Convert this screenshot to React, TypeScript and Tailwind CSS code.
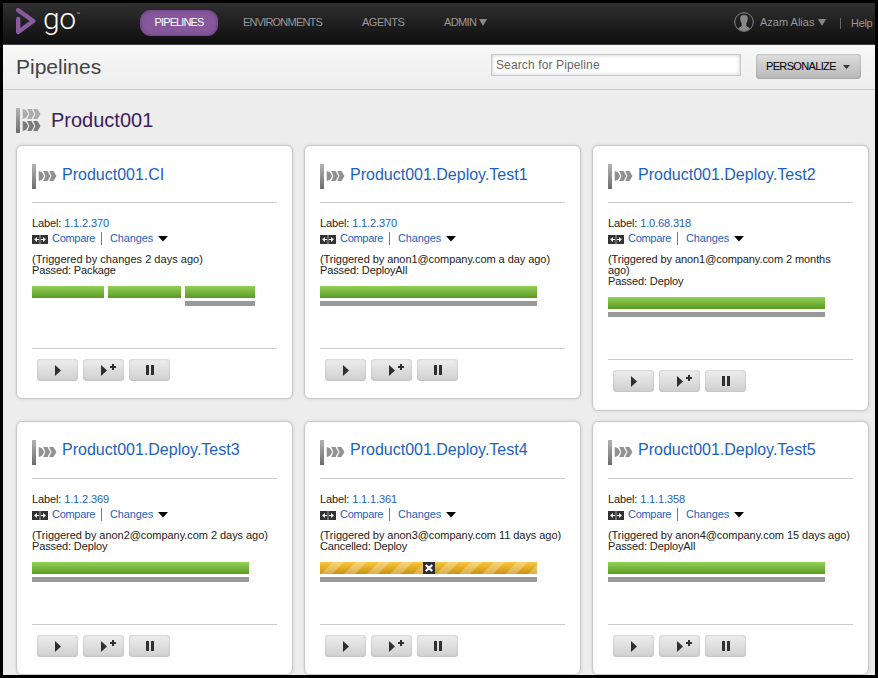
import React from "react";

type Pipeline = {
  name: string;
  label: string;
  trigger: string[];
  status: string;
  stages?: "three" | "cancelled";
  titleOffset: string;
  triggerSpacing: string;
};

const pipelines: Pipeline[] = [
  { name: "Product001.CI", label: "1.1.2.370", trigger: ["(Triggered by changes 2 days ago)"], status: "Passed: Package", stages: "three", titleOffset: "pt-px", triggerSpacing: "tracking-[0.02px]" },
  { name: "Product001.Deploy.Test1", label: "1.1.2.370", trigger: ["(Triggered by anon1@company.com a day ago)"], status: "Passed: DeployAll", titleOffset: "pt-px", triggerSpacing: "tracking-[-0.06px]" },
  { name: "Product001.Deploy.Test2", label: "1.0.68.318", trigger: ["(Triggered by anon1@company.com 2 months", "ago)"], status: "Passed: Deploy", titleOffset: "pt-px", triggerSpacing: "tracking-[-0.08px]" },
  { name: "Product001.Deploy.Test3", label: "1.1.2.369", trigger: ["(Triggered by anon2@company.com 2 days ago)"], status: "Passed: Deploy", titleOffset: "pt-0", triggerSpacing: "tracking-[-0.05px]" },
  { name: "Product001.Deploy.Test4", label: "1.1.1.361", trigger: ["(Triggered by anon3@company.com 11 days ago)"], status: "Cancelled: Deploy", stages: "cancelled", titleOffset: "pt-0", triggerSpacing: "tracking-[-0.05px]" },
  { name: "Product001.Deploy.Test5", label: "1.1.1.358", trigger: ["(Triggered by anon4@company.com 15 days ago)"], status: "Passed: DeployAll", titleOffset: "pt-0", triggerSpacing: "tracking-[-0.05px]" },
];

function Chevrons({ y, h, fill }: { y: number; h: number; fill: string }) {
  const m = y + h / 2;
  const b = y + h;
  return (
    <g fill={fill}>
      <path d={`M6.7 ${y}L9.8 ${y + 1}L12.3 ${m}L9.8 ${b - 1}L6.7 ${b}Z`} />
      <path d={`M11.2 ${y}H15.5L18.3 ${m}L15.5 ${b}H11.2L13.4 ${m}Z`} />
      <path d={`M17.2 ${y}H21.5L24.5 ${m}L21.5 ${b}H17.2L19.4 ${m}Z`} />
    </g>
  );
}

function PipelineIcon() {
  return (
    <svg width="25" height="25" viewBox="0 0 25 25" className="shrink-0">
      <defs>
        <linearGradient id="bar" x1="0" y1="0" x2="0" y2="1">
          <stop offset="0" stopColor="#b4b4b4" />
          <stop offset="1" stopColor="#6c6c6c" />
        </linearGradient>
      </defs>
      <rect width="4" height="25" fill="url(#bar)" />
      <Chevrons y={7} h={10} fill="#929292" />
    </svg>
  );
}

function GroupIcon() {
  return (
    <svg width="25" height="25" viewBox="0 0 25 25" className="shrink-0">
      <rect width="4" height="25" fill="url(#bar)" />
      <Chevrons y={1} h={10} fill="#acacac" />
      <Chevrons y={13} h={10} fill="#7c7c7c" />
    </svg>
  );
}

function CompareIcon() {
  return (
    <svg width="16" height="9" viewBox="0 0 16 9" className="mt-[2px] shrink-0">
      <rect width="16" height="9" fill="#333" />
      <path d="M2 4.5L5 2V4H7V5H5V7ZM14 4.5L11 2V4H9V5H11V7Z" fill="#eee" />
      <rect x="7.5" width="1" height="9" fill="#aaa" />
    </svg>
  );
}

function ActionButton({ children }: { children: React.ReactNode }) {
  return (
    <button className="flex h-[22px] w-[41px] items-center justify-center rounded-[4px] bg-linear-to-b from-[#eeeeee] to-[#cfcfcf] shadow-[inset_0_0_2px_#aaa]">
      <svg width="41" height="22" viewBox="0 0 41 22" fill="#2f2f2f">{children}</svg>
    </button>
  );
}

function Stages({ kind }: { kind?: Pipeline["stages"] }) {
  const green = "h-3 bg-linear-to-b from-[#93d055] to-[#5c9a23]";
  if (kind === "three") {
    return (
      <div className="flex gap-1">
        <div className={`${green} w-[72px]`} />
        <div className={`${green} w-[73px]`} />
        <div className="w-[70px]">
          <div className={green} />
          <div className="mt-[3px] h-[5px] bg-[#999]" />
        </div>
      </div>
    );
  }
  return (
    <div className="w-[217px]">
      {kind === "cancelled" ? (
        <svg width="217" height="12" viewBox="0 0 217 12" className="block">
          <defs>
            <linearGradient id="amber" x1="0" y1="0" x2="0" y2="1">
              <stop offset="0" stopColor="#fbc63e" />
              <stop offset="1" stopColor="#c9920f" />
            </linearGradient>
          </defs>
          <rect width="217" height="12" fill="url(#amber)" />
          {[-21, 2, 25, 48, 71, 94, 117, 140, 163, 186, 209].map((x) => (
            <path key={x} d={`M${x - 1} 12L${x + 11} 0H${x + 22}L${x + 10} 12Z`} fill="#fff" fillOpacity=".28" />
          ))}
          <rect x="103" width="12" height="12" fill="#2f2f33" />
          <path d="M105.8 3L112.2 9M112.2 3L105.8 9" stroke="#fff" strokeWidth="2.3" />
        </svg>
      ) : (
        <div className={green} />
      )}
      <div className="mt-[3px] h-[5px] bg-[#999]" />
    </div>
  );
}

function Card({ p }: { p: Pipeline }) {
  const bottom = p.trigger.length > 1 ? "pb-[18px]" : "pb-[17px]";
  return (
    <section className={`flex w-[277px] flex-col self-start rounded-[6px] border border-[#c8c8c8] bg-white px-[15px] shadow-[0_0_3px_#ccc] ${bottom}`}>
      <div className="flex h-[57px] shrink-0 gap-[5px] border-b border-[#ccc] pt-[18px]">
        <PipelineIcon />
        <h3 className={`text-base leading-[20px] whitespace-nowrap text-[#1c62bd] ${p.titleOffset}`}>{p.name}</h3>
      </div>
      <div className="mt-[13px] h-[15px] text-[11px] leading-[15px] tracking-[-0.12px] whitespace-nowrap">
        Label: <a className="text-[#1c62bd]">{p.label}</a>
      </div>
      <div className="flex h-[15px] items-center text-[11px] leading-[15px] text-[#1c62bd]">
        <CompareIcon />
        <a className="ml-1 w-[43px] tracking-[-0.3px]">Compare</a>
        <span className="ml-[6px] h-[13px] w-px bg-[#777]" />
        <a className="ml-[8px] w-[43px] tracking-[-0.15px]">Changes</a>
        <svg width="10" height="6" viewBox="0 0 10 6" className="ml-[5px]"><path d="M0 0H10L5 5.5Z" fill="#000" /></svg>
      </div>
      <div className={`mt-[8px] text-[11px] leading-[11px] whitespace-nowrap ${p.triggerSpacing}`}>
        {p.trigger.map((t) => <div key={t}>{t}</div>)}
        <div className="tracking-[-0.12px]">{p.status}</div>
      </div>
      <div className="mt-[10px] h-[62px]">
        <Stages kind={p.stages} />
      </div>
      <div className="flex gap-[5px] border-t border-[#ccc] pt-[10px] pl-[5px]">
        <ActionButton><path d="M18 6L24 11.5L18 17Z" /></ActionButton>
        <ActionButton><path d="M18 6L24 11.5L18 17ZM29 5H31V7H33V9H31V11H29V9H27V7H29Z" /></ActionButton>
        <ActionButton><path d="M17 6H20V16H17ZM22 6H25V16H22Z" /></ActionButton>
      </div>
    </section>
  );
}

function Caret() {
  return <svg width="8" height="7" viewBox="0 0 8 7"><path d="M0 0H8L4 7Z" fill="#888" /></svg>;
}

export default function App() {
  return (
    <div className="h-[678px] w-[878px] overflow-hidden border-[3px] border-black bg-[#ededed] font-['Liberation_Sans',Arial,sans-serif] text-[#222]">
      <header className="flex h-[42px] border-b border-[#444] bg-linear-to-b from-[#303030] to-[#0f0f0f] text-[11px] text-[#999]">
        <div className="flex w-[137px] pl-[13px]">
          <svg width="20" height="27" viewBox="0 0 20 27" className="mt-[5px]">
            <path d="M2.2 2.2L17.3 13L2.2 24V11" fill="none" stroke="#8a5a9e" strokeWidth="4.4" strokeLinejoin="round" strokeLinecap="round" />
          </svg>
          <span className="ml-[7px] w-[33px] font-['Roboto',sans-serif] text-[30px] leading-[31px] font-light tracking-[-0.5px] text-white">go</span>
          <span className="mt-[8px] text-[4px] leading-[5px] text-[#ccc]">™</span>
        </div>
        <nav className="flex h-[38px] items-center">
          <a className="mt-px flex h-[26px] w-[78px] items-center justify-center rounded-[11px] bg-[#87579c] tracking-[-0.9px] text-white shadow-[inset_0_0_4px_#603878]">PIPELINES</a>
          <a className="ml-[25px] w-[79px] tracking-[-0.8px] whitespace-nowrap">ENVIRONMENTS</a>
          <a className="ml-[40px] w-[42px] tracking-[-0.5px]">AGENTS</a>
          <a className="ml-[40px] w-[32px] tracking-[-0.65px]">ADMIN</a>
          <span className="ml-[3px]"><Caret /></span>
        </nav>
        <div className="ml-[247px] flex h-[38px] items-center whitespace-nowrap">
          <svg width="20" height="20" viewBox="0 0 20 20" className="shrink-0">
            <circle cx="10" cy="10" r="9.3" fill="none" stroke="#888" />
            <path d="M10 3C7 3 5.9 5 6.3 7.5C6.5 10 7.7 11 7.7 12V14L4 16.5Q6.5 19 10 19Q13.5 19 16 16.5L12.3 14V12C12.3 11 13.5 10 13.7 7.5C14.1 5 13 3 10 3Z" fill="#888" />
          </svg>
          <span className="ml-[6px] w-[55px]">Azam Alias</span>
          <span className="ml-[3px]"><Caret /></span>
          <span className="mt-[2px] ml-[14px] h-[11px] w-px bg-[#666]" />
          <span className="mt-[2px] ml-[10px] tracking-[-0.3px]">Help</span>
        </div>
      </header>
      <div className="flex h-[45px] border-b border-[#ccc] bg-linear-to-b from-[#f8f8f8] to-[#ededed]">
        <h1 className="ml-[13px] w-[475px] pt-[10px] text-[21px] leading-[24px] text-[#444]">Pipelines</h1>
        <input placeholder="Search for Pipeline" className="mt-[9px] h-[22px] w-[250px] border border-[#c8c8c8] bg-white px-1 text-xs tracking-[0.12px] shadow-[inset_0_0_4px_#ccc] placeholder:text-[#666]" />
        <button className="mt-[9px] ml-[15px] flex h-[25px] w-[105px] items-center rounded-[4px] bg-linear-to-b from-[#dedede] to-[#b8b8b8] pl-[10px] text-[11px] text-black shadow-[inset_0_0_2px_#888]">
          <span className="w-[70px] text-left tracking-[-0.65px]">PERSONALIZE</span>
          <svg width="7" height="4" viewBox="0 0 7 4" className="mt-px ml-[7px] shrink-0"><path d="M0 0H7L3.5 4Z" fill="#333" /></svg>
        </button>
      </div>
      <main className="pt-[18px] pl-[13px]">
        <div className="flex h-[37px] gap-[10px]">
          <GroupIcon />
          <h2 className="text-[20px] leading-[24px] text-[#3b2060]">Product001</h2>
        </div>
        <div className="grid grid-cols-[277px_277px_277px] grid-rows-[276px_276px] gap-x-[11px]">
          {pipelines.map((p) => <Card key={p.name} p={p} />)}
        </div>
      </main>
    </div>
  );
}
